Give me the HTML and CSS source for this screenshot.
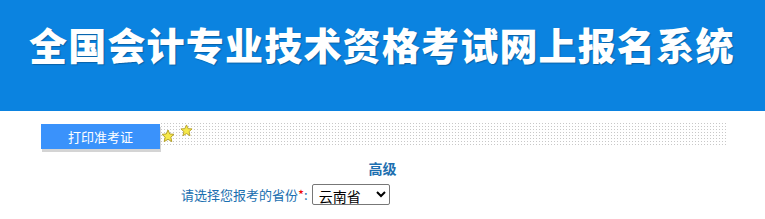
FILE: index.html
```html
<!DOCTYPE html>
<html>
<head>
<meta charset="utf-8">
<link rel="stylesheet" href="styles.css">
</head>
<body>
<header class="banner">
  <h1 class="title">全国会计专业技术资格考试网上报名系统</h1>
</header>
<div class="tabbar">
  <div class="tab">打印准考证</div>
  <div class="dots">
    <svg class="star s1" width="14" height="14" viewBox="0 0 14 14"><polygon points="7,1 8.8,5 13,5.3 9.8,8.2 10.8,12.6 7,10.3 3.2,12.6 4.2,8.2 1,5.3 5.2,5" fill="#f6e94a" stroke="#b5a12a" stroke-width="1"/></svg>
    <svg class="star s2" width="13" height="13" viewBox="0 0 14 14"><polygon points="7,1 8.8,5 13,5.3 9.8,8.2 10.8,12.6 7,10.3 3.2,12.6 4.2,8.2 1,5.3 5.2,5" fill="#f6e94a" stroke="#b5a12a" stroke-width="1"/></svg>
  </div>
</div>
<div class="level">高级</div>
<div class="formrow">
  <label class="lbl">请选择您报考的省份<span class="req">*</span>:</label>
  <select class="sel"><option>云南省</option></select>
</div>
</body>
</html>
```
FILE: styles.css
```css
html, body { margin: 0; padding: 0; background: #fff; }
body { font-family: "Noto Sans CJK SC", "Liberation Sans", sans-serif; }
.banner {
  height: 111px;
  background: #0b83e0;
  display: flex;
  align-items: flex-start;
}
.title {
  margin: 18px 0 0 29px;
  color: #fff;
  font-size: 38px;
  font-weight: 900;
  letter-spacing: 1.2px;
  line-height: 52px;
  white-space: nowrap;
  text-shadow: 1px 1px 1px rgba(0,0,0,0.25);
}
.tabbar {
  display: flex;
  margin: 13px 0 0 41px;
  height: 28px;
}
.tab {
  width: 119px;
  height: 25px;
  background: #3a92fb;
  color: #fff;
  font-size: 13px;
  line-height: 25px;
  text-align: center;
  box-shadow: 1px 3px 0 #d4d4d4;
}
.dots {
  position: relative;
  width: 566px;
  height: 24px;
  margin-top: -2px;
  background-image: radial-gradient(circle, #c8c8c8 0.8px, transparent 0.9px);
  background-size: 3px 3px;
  background-position: 0 0;
}
.star { position: absolute; }
.s1 { left: 1px; top: 7px; }
.s2 { left: 20px; top: 2px; }
.level {
  margin-top: 6px;
  text-align: center;
  color: #1d6fb0;
  font-size: 14px;
  font-weight: bold;
  line-height: 20px;
}
.formrow {
  display: flex;
  align-items: center;
  margin: 6px 0 0 181px;
}
.lbl { color: #1b6fb0; font-size: 13px; margin-right: 4px; }
.req { color: #e00; }
.sel {
  width: 78px;
  height: 21px;
  font-size: 14px;
  font-family: "Noto Sans CJK SC", sans-serif;
  border: 1px solid #777;
  border-radius: 2px;
  background: #fff;
  color: #000;
  padding: 0 0 0 2px;
}
```
